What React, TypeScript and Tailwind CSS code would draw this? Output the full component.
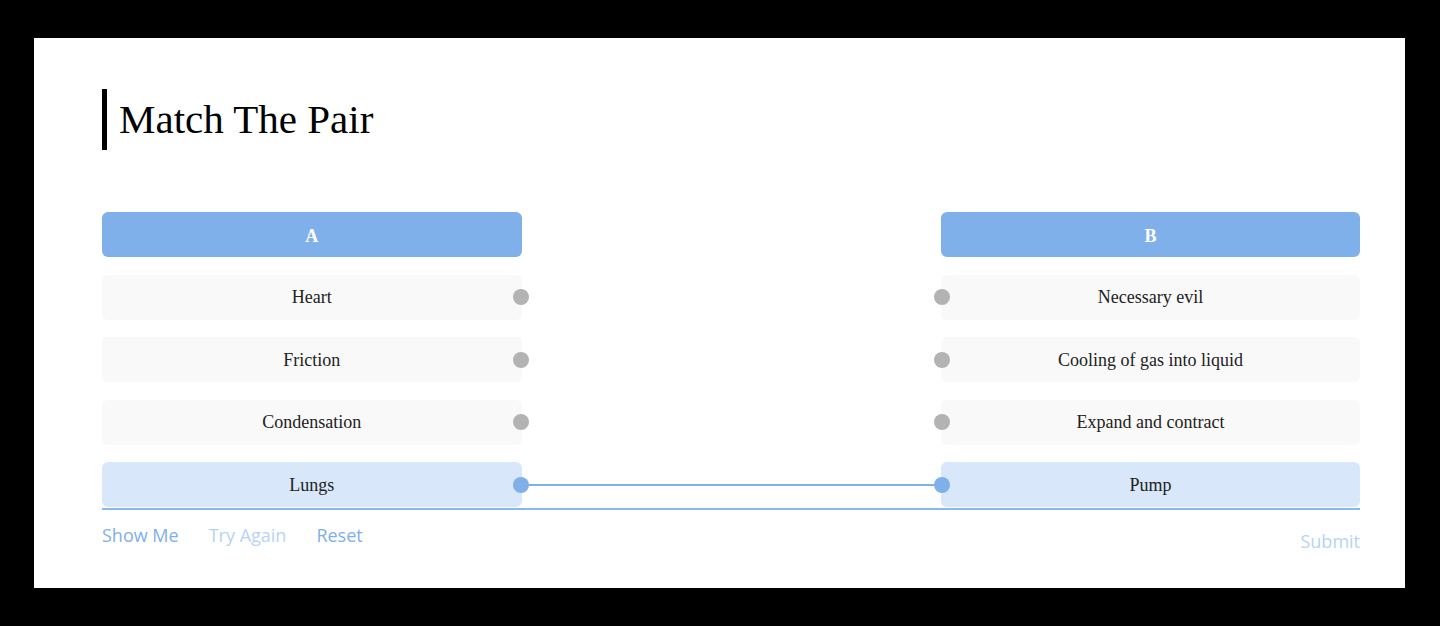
import React from "react";

const serif = { fontFamily: '"Liberation Serif", "Times New Roman", serif' };
const sans = { fontFamily: '"Open Sans", "Liberation Sans", sans-serif' };

type Row = { a: string; b: string; linked?: boolean };

const rows: Row[] = [
  { a: "Heart", b: "Necessary evil" },
  { a: "Friction", b: "Cooling of gas into liquid" },
  { a: "Condensation", b: "Expand and contract" },
  { a: "Lungs", b: "Pump", linked: true },
];

function Dot({ side, active }: { side: "left" | "right"; active?: boolean }) {
  return (
    <span
      className={
        "absolute top-1/2 -translate-y-1/2 w-4 h-4 rounded-full " +
        (active ? "bg-[#7fb0ea] " : "bg-[#b3b3b3] ") +
        (side === "right" ? "right-[-7.5px]" : "left-[-7px]")
      }
    />
  );
}

export default function App() {
  return (
    <div className="w-[1440px] h-[626px] bg-black pt-[38px] pl-[34px]">
      <div className="w-[1371px] h-[550px] bg-white pl-[68px] pr-[45px] pt-[51px]" style={serif}>
        <div className="flex items-center h-[61px] border-l-[5px] border-black pl-[12px]">
          <h1 className="text-[41px] text-black" style={serif}>
            Match The Pair
          </h1>
        </div>

        <div className="mt-[62px] flex flex-col gap-[17.5px]">
          <div className="flex">
            <div className="w-[419.5px] h-[45px] rounded-md bg-[#7fb0ea] flex items-center justify-center pt-[3px] text-white font-bold text-[18px]">
              A
            </div>
            <div className="flex-1" />
            <div className="w-[419px] h-[45px] rounded-md bg-[#7fb0ea] flex items-center justify-center pt-[3px] text-white font-bold text-[18px]">
              B
            </div>
          </div>

          {rows.map((r) => (
            <div key={r.a} className="flex">
              <div
                className={
                  "relative w-[419.5px] h-[45px] rounded-md flex items-center justify-center pt-[1px] text-[18px] text-[#222] " +
                  (r.linked ? "bg-[#d8e7f9]" : "bg-[#f9f9f9]")
                }
              >
                {r.a}
                <Dot side="right" active={r.linked} />
              </div>
              <div className="flex-1 flex items-center">
                {r.linked && <div className="w-full h-[2px] bg-[#7fb0ea]" />}
              </div>
              <div
                className={
                  "relative w-[419px] h-[45px] rounded-md flex items-center justify-center pt-[1px] text-[18px] text-[#222] " +
                  (r.linked ? "bg-[#d8e7f9]" : "bg-[#f9f9f9]")
                }
              >
                {r.b}
                <Dot side="left" active={r.linked} />
              </div>
            </div>
          ))}
        </div>
        <div className="h-[2px] bg-[#8ab8ee] mt-[0.5px]" />

        <div className="flex justify-between items-start mt-[12px]" style={sans}>
          <div className="flex gap-[30px] text-[18px] leading-[26px]">
            <span className="text-[#7fb0ea]">Show Me</span>
            <span className="text-[#b6d3f5]">Try Again</span>
            <span className="text-[#7fb0ea]">Reset</span>
          </div>
          <span className="text-[18px] leading-[26px] text-[#b6d3f5] mt-[6px]">Submit</span>
        </div>
      </div>
    </div>
  );
}
